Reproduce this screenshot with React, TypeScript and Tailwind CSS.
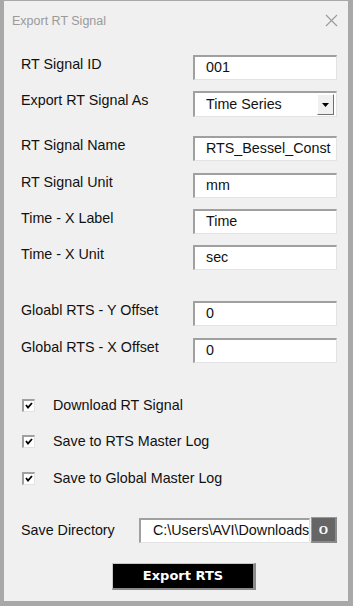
import React from "react";

const font = { fontFamily: '"Liberation Sans", Arial, sans-serif' };

function Field({ value, w = "w-[144px]", pl = "pl-[11px]" }: { value: string; w?: string; pl?: string }) {
  return (
    <div
      className={`${w} ${pl} h-[25px] shrink-0 bg-white border-t-2 border-l-2 border-t-[#a0a0a0] border-l-[#a0a0a0] border-b border-r border-b-[#e3e3e3] border-r-[#e3e3e3] flex items-center overflow-hidden whitespace-nowrap text-[14.3px] text-[#111]`}
    >
      {value}
    </div>
  );
}

function Row({ label, children, mt }: { label: string; children: React.ReactNode; mt: string }) {
  return (
    <div className={`flex items-start ${mt}`}>
      <div className="w-[189px] pl-[17px] leading-[20px] text-[14.3px] text-[#111] -mt-[1px]">{label}</div>
      {children}
    </div>
  );
}

function Check({ label, mt }: { label: string; mt: string }) {
  return (
    <div className={`flex items-center pl-[18px] ${mt}`}>
      <div className="w-[13px] h-[13px] bg-white border-t-2 border-l-2 border-t-[#a0a0a0] border-l-[#a0a0a0] border-b border-r border-b-[#e3e3e3] border-r-[#e3e3e3] flex items-center justify-center">
        <svg width="8" height="7" viewBox="0 0 8 7">
          <path d="M1 3 L3 5.5 L7 1" stroke="#000" strokeWidth="1.8" fill="none" />
        </svg>
      </div>
      <span className="ml-[18px] text-[14.3px] leading-[20px] text-[#111]">{label}</span>
    </div>
  );
}

export default function App() {
  return (
    <div
      style={font}
      className="w-[353px] h-[606px] bg-[#f0f0f0] border-t border-l-4 border-r-[5px] border-b-[5px] border-[#a8a8a8] flex flex-col"
    >
      <div className="h-[39px] flex items-center justify-between pl-[8px] pr-[10px]">
        <span className="text-[12.5px] text-[#9a9a9a] mt-[1px]">Export RT Signal</span>
        <svg width="13" height="13" viewBox="0 0 13 13">
          <path d="M1 1 L12 12 M12 1 L1 12" stroke="#9a9a9a" strokeWidth="1.1" />
        </svg>
      </div>

      <Row label="RT Signal ID" mt="mt-[15px]">
        <Field value="001" />
      </Row>
      <Row label="Export RT Signal As" mt="mt-[11px]">
        <div className="w-[144px] h-[26px] bg-white border-t-2 border-l-2 border-t-[#a0a0a0] border-l-[#a0a0a0] border-b border-r border-b-[#e3e3e3] border-r-[#e3e3e3] pl-[11px] flex items-center text-[14.3px] text-[#111]">
          <span className="flex-1">Time Series</span>
          <div className="w-[17px] h-[21px] mr-[2px] bg-[#f0f0f0] border-t border-l border-t-[#fff] border-l-[#fff] border-b border-r border-b-[#707070] border-r-[#707070] flex items-center justify-center">
            <svg width="7" height="4" viewBox="0 0 7 4">
              <path d="M0 0 L7 0 L3.5 4 Z" fill="#000" />
            </svg>
          </div>
        </div>
      </Row>
      <Row label="RT Signal Name" mt="mt-[19px]">
        <Field value="RTS_Bessel_Const" />
      </Row>
      <Row label="RT Signal Unit" mt="mt-[12px]">
        <Field value="mm" />
      </Row>
      <Row label="Time - X Label" mt="mt-[11px]">
        <Field value="Time" />
      </Row>
      <Row label="Time - X Unit" mt="mt-[11px]">
        <Field value="sec" />
      </Row>
      <Row label="Gloabl RTS - Y Offset" mt="mt-[31px]">
        <Field value="0" />
      </Row>
      <Row label="Global RTS - X Offset" mt="mt-[12px]">
        <Field value="0" />
      </Row>

      <Check label="Download RT Signal" mt="mt-[32px]" />
      <Check label="Save to RTS Master Log" mt="mt-[16px]" />
      <Check label="Save to Global Master Log" mt="mt-[17px]" />

      <div className="flex items-center mt-[29px]">
        <div className="w-[135px] pl-[17px] text-[14.3px] leading-[20px] text-[#111] -mt-[1px]">Save Directory</div>
        <Field value="C:\Users\AVI\Downloads" w="w-[171px]" pl="pl-[12px]" />
        <div className="w-[26px] h-[26px] ml-[1px] bg-[#666666] border-t border-l border-[#999] border-r-2 border-b-2 border-r-[#8a8a8a] border-b-[#8a8a8a] flex items-center justify-center">
          <span className="text-white font-bold text-[12px]" style={{ fontFamily: '"Liberation Serif", serif' }}>
            O
          </span>
        </div>
      </div>

      <div className="flex mt-[20px] pl-[108px]">
        <div className="w-[144px] h-[27px] bg-black border-t border-l border-[#c8c8c8] border-r-[3px] border-b-2 border-r-[#8a8a8a] border-b-[#8a8a8a] flex items-center justify-center text-white font-bold text-[13px]" style={{ fontFamily: 'Tahoma, "DejaVu Sans", sans-serif' }}>
          Export RTS
        </div>
      </div>
    </div>
  );
}
